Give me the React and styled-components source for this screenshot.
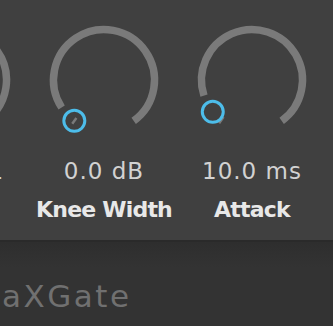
import React from 'react';
import styled, { createGlobalStyle } from 'styled-components';

const GlobalStyle = createGlobalStyle`
  html, body {
    margin: 0;
    padding: 0;
    background: #404040;
  }
`;

const START = -144;
const END = 144;
const GAP = 21;

const Page = styled.div`
  width: 100%;
  height: 100vh;
  display: flex;
  flex-direction: column;
  overflow: hidden;
`;

const Panel = styled.div`
  height: 240px;
  background: #404040;
  overflow: hidden;
`;

const Row = styled.div`
  display: flex;
  margin-left: -118px;
`;

const Column = styled.div`
  width: 148px;
  flex: none;
  display: flex;
  flex-direction: column;
  align-items: center;
  padding-top: 20px;
`;

const KnobSvg = styled.svg`
  display: block;
  width: 120px;
  height: 120px;
  overflow: visible;
`;

const Value = styled.div`
  margin-top: 18px;
  font-family: 'DejaVu Sans', Verdana, sans-serif;
  font-size: 23px;
  line-height: 26px;
  letter-spacing: 1px;
  color: #d2d2d2;
  white-space: nowrap;
`;

const Label = styled.div`
  margin-top: 13px;
  font-family: 'DejaVu Sans', Verdana, sans-serif;
  font-weight: bold;
  font-size: 22px;
  line-height: 26px;
  letter-spacing: -0.8px;
  color: #e8e8e8;
  white-space: nowrap;
`;

const Footer = styled.div`
  flex: 1;
  border-top: 2px solid #2a2a2a;
  background: linear-gradient(#2e2e2e, #333333 30%);
  display: flex;
  align-items: flex-start;
  padding: 36px 0 0 2px;
`;

const Brand = styled.div`
  font-family: 'DejaVu Sans', sans-serif;
  font-size: 31px;
  line-height: 36px;
  letter-spacing: 2.5px;
  color: #707070;
`;

// angle in degrees, clockwise from top
const pt = (a, r) => {
  const rad = (a * Math.PI) / 180;
  return [60 + r * Math.sin(rad), 60 - r * Math.cos(rad)];
};

const arc = (a1, a2, r) => {
  const [x1, y1] = pt(a1, r);
  const [x2, y2] = pt(a2, r);
  const large = a2 - a1 > 180 ? 1 : 0;
  return `M ${x1} ${y1} A ${r} ${r} 0 ${large} 1 ${x2} ${y2}`;
};

const Knob = ({ value, tick }) => {
  const a = START + value * (END - START);
  const [tx, ty] = pt(a, 50.5);
  const [p1x, p1y] = pt(a, 47);
  const [p2x, p2y] = pt(a, 54);
  return (
    <KnobSvg viewBox="0 0 120 120">
      {a > START && (
        <path d={arc(START, a, 50.5)} fill="none" stroke="#7a7a7a" strokeWidth="7.5" />
      )}
      <path d={arc(a + GAP, END, 50.5)} fill="none" stroke="#7a7a7a" strokeWidth="7.5" />
      <circle cx={tx} cy={ty} r="10.5" fill="#404040" stroke="#4dbdea" strokeWidth="3" />
      {tick && (
        <line x1={p1x} y1={p1y} x2={p2x} y2={p2y} stroke="#7a7a7a" strokeWidth="2.5" />
      )}
    </KnobSvg>
  );
};

const knobs = [
  { label: 'Ratio', text: '10.0 : 1', value: 0.3 },
  { label: 'Knee Width', text: '0.0 dB', value: 0, tick: true },
  { label: 'Attack', text: '10.0 ms', value: 0.052 },
];

export default function App() {
  return (
    <Page>
      <GlobalStyle />
      <Panel>
        <Row>
          {knobs.map((k) => (
            <Column key={k.label}>
              <Knob value={k.value} tick={k.tick} />
              <Value>{k.text}</Value>
              <Label>{k.label}</Label>
            </Column>
          ))}
        </Row>
      </Panel>
      <Footer>
        <Brand>aXGate</Brand>
      </Footer>
    </Page>
  );
}
